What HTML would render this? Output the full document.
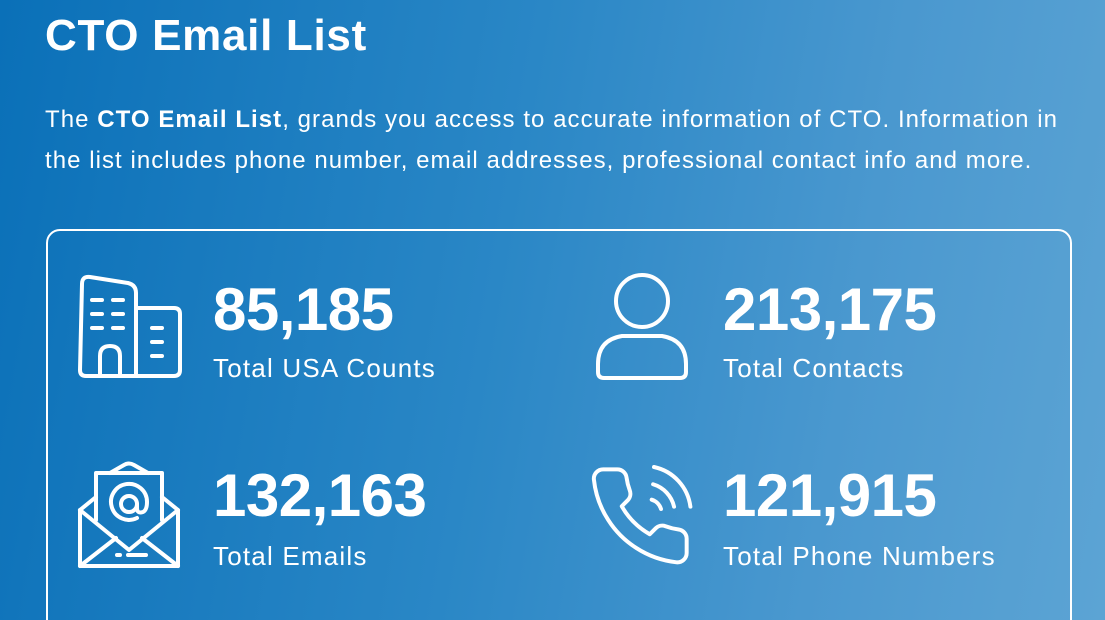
<!DOCTYPE html>
<html><head><meta charset="utf-8"><style>
*{margin:0;padding:0;box-sizing:border-box}
html{width:1105px;height:620px;overflow:hidden}
body{width:1105px;height:620px;overflow:hidden;font-family:"Liberation Sans",sans-serif;color:#fff;
background:linear-gradient(100deg,#0a70b8 0%,#2a87c6 45%,#4a98cf 75%,#5ca4d4 100%);position:relative}
.t{position:absolute;left:45px;top:11px;font-size:44px;font-weight:bold;letter-spacing:0.7px;white-space:nowrap}
.p{position:absolute;left:45px;top:99px;font-size:24px;line-height:41px;width:1060px;letter-spacing:1.05px;white-space:nowrap}
.card{position:absolute;left:46px;top:229px;width:1026px;height:420px;border:2.5px solid #fff;border-radius:14px}
.n{position:absolute;font-size:60px;font-weight:bold;line-height:1;letter-spacing:-0.5px}
.l{position:absolute;font-size:26px;line-height:1;letter-spacing:1.2px}
svg{position:absolute;fill:none;stroke:#fff;stroke-width:4;stroke-linecap:round;stroke-linejoin:round}
</style></head><body>
<div class="t">CTO Email List</div>
<div class="p">The <b>CTO Email List</b>, grands you access to accurate information of CTO. Information in<br>the list includes phone number, email addresses, professional contact info and more.</div>
<div class="card"></div>
<svg style="left:76px;top:272px" width="110" height="112" viewBox="0 0 110 112">
<path d="M6 12 Q6 4 14 5 L52 11 Q60 13 60 21 L60 104 L10 104 Q4 104 4 98 Z"/>
<path d="M60 36 L98 36 Q104 36 104 42 L104 98 Q104 104 98 104 L60 104"/>
<path d="M16 28h10M37 28h10M16 42h10M37 42h10M16 56h10M37 56h10M76 56h10M76 70h10M76 84h10"/>
<path d="M24 104 L24 84 Q24 74 34 74 Q44 74 44 84 L44 104"/>
</svg>
<svg style="left:76px;top:460px" width="110" height="112" viewBox="0 0 110 112">
<path d="M4 50 L4 106 L102 106 L102 50 L86 37 M4 50 L20 37"/>
<path d="M34 13 L48 5 Q53 2 58 5 L72 13"/>
<path d="M20 60 L20 13 L86 13 L86 60"/>
<path d="M4 50 L53 90 L102 50 M4 106 L40 78 M102 106 L66 78"/>
<circle cx="53" cy="44" r="8"/><path d="M61 44 v4 q0 6 6 4 q4-2 4-10 a18 18 0 1 0 -10 16"/>
<path d="M41 95h3M52 95h18"/>
</svg>
<svg style="left:592px;top:272px" width="100" height="112" viewBox="0 0 100 112">
<circle cx="50" cy="29" r="26"/>
<path d="M30 64 L70 64 Q94 68 94 92 L94 100 Q94 106 88 106 L12 106 Q6 106 6 100 L6 92 Q6 68 30 64 Z"/>
</svg>
<svg style="left:584px;top:460px" width="112" height="112" viewBox="0 0 24 24">
<g style="stroke-width:0.85"><path d="M22 16.92v3a2 2 0 0 1-2.18 2 19.79 19.79 0 0 1-8.63-3.07 19.5 19.5 0 0 1-6-6 19.79 19.79 0 0 1-3.07-8.67A2 2 0 0 1 4.11 2h3a2 2 0 0 1 2 1.72 12.84 12.84 0 0 0 .7 2.81 2 2 0 0 1-.45 2.11L8.09 9.91a16 16 0 0 0 6 6l1.27-1.27a2 2 0 0 1 2.11-.45 12.84 12.84 0 0 0 2.81.7A2 2 0 0 1 22 16.92z"/>
<path d="M14.5 8.5A3 3 0 0 1 16.5 10.5M14.8 5.2A6.5 6.5 0 0 1 19.3 10M15 1.5A10 10 0 0 1 22.8 10"/></g>
</svg>
<div class="n" style="left:213px;top:280px">85,185</div>
<div class="l" style="left:213px;top:355px">Total USA Counts</div>
<div class="n" style="left:723px;top:280px">213,175</div>
<div class="l" style="left:723px;top:355px">Total Contacts</div>
<div class="n" style="left:213px;top:466px">132,163</div>
<div class="l" style="left:213px;top:543px">Total Emails</div>
<div class="n" style="left:723px;top:466px">121,915</div>
<div class="l" style="left:723px;top:543px">Total Phone Numbers</div>
</body></html>
